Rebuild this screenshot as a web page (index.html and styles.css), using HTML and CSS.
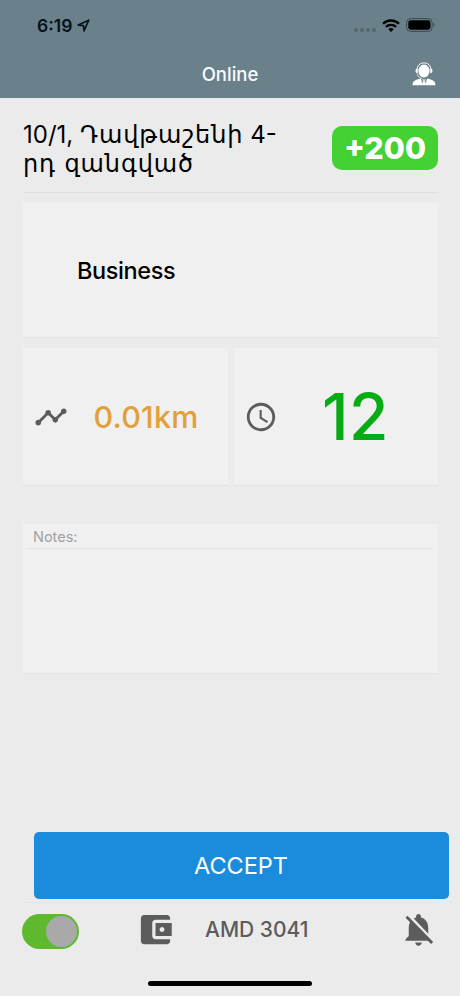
FILE: index.html
```html
<!DOCTYPE html>
<html lang="en">
<head>
    <meta charset="UTF-8">
    <meta name="viewport" content="width=device-width, initial-scale=1.0">
    <title>Online</title>
    <link rel="stylesheet" href="styles.css">
</head>
<body>

    <!-- Status bar and title -->
    <header class="header">
        <div class="status-bar">
            <span class="time">6:19</span>
            <svg class="location" width="13" height="13" viewBox="0 0 13 13"><path d="M1.2 6.1L11.8 1.2 7 11.8 6.5 6.6z" fill="none" stroke="#071219" stroke-width="1.6" stroke-linejoin="round"/></svg>
            <div class="signal"><i></i><i></i><i></i><i></i></div>
            <svg class="wifi" width="18" height="13" viewBox="0 0 18 13">
                <path d="M1 4.8a11.4 11.4 0 0 1 16 0M3.9 7.9a7.2 7.2 0 0 1 10.2 0" fill="none" stroke="#000" stroke-width="2.3"/>
                <path d="M9 12.9L6.3 10.2a3.9 3.9 0 0 1 5.4 0z"/>
            </svg>
            <svg class="battery" width="30" height="14" viewBox="0 0 30 14">
                <rect x="0.6" y="0.6" width="25.6" height="12.8" rx="4" fill="none" stroke="#3c4a51"/>
                <rect x="2.3" y="2.3" width="22.2" height="9.4" rx="2.4"/>
                <path d="M27.6 4.8v4.4c1.6-.8 1.6-3.6 0-4.4z" fill="#3c4a51"/>
            </svg>
        </div>
        <div class="title-bar">
            <h1>Online</h1>
            <svg class="operator" width="24" height="24" viewBox="0 0 24 24">
                <ellipse cx="12" cy="9" rx="5.6" ry="6.4" fill="#fff"/>
                <path d="M5 8.6C5 3.2 8 .9 12 .9s7 2.3 7 7.7" fill="none" stroke="#fff" stroke-width="1"/>
                <path d="M5.6 6.6v4.8c-2.8 0-2.8-4.8 0-4.8zM18.4 6.6v4.8c2.8 0 2.8-4.8 0-4.8z" fill="#fff"/>
                <path d="M5.2 11.5c.6 3 2.6 4.6 5 5" fill="none" stroke="#fff" stroke-width=".8"/>
                <path d="M.5 23.2c0-4.2 3.2-5.2 8.2-6.6l1.8 4.8.8-2.5h1.4l.8 2.5 1.8-4.8c5 1.4 8.2 2.4 8.2 6.6z" fill="#fff"/>
                <path d="M10 17.6h4l-1 1.2h-2z" fill="#fff"/>
            </svg>
        </div>
    </header>

    <main class="order">
        <!-- Address -->
        <section class="address-row">
            <p class="address">10/1, <span class="hy">Դավթաշենի</span> 4-<br><span class="hy">րդ զանգված</span></p>
            <span class="bonus">+200</span>
        </section>

        <section class="card tariff">Business</section>

        <!-- Distance and time -->
        <div class="stats">
            <section class="card stat">
                <svg class="stat-icon" viewBox="0 0 24 24"><path d="M23 8c0 1.1-.9 2-2 2-.18 0-.35-.02-.51-.07l-3.56 3.55c.05.16.07.34.07.52 0 1.1-.9 2-2 2s-2-.9-2-2c0-.18.02-.36.07-.52l-2.55-2.55c-.16.05-.34.07-.52.07s-.36-.02-.52-.07l-4.55 4.56c.05.16.07.33.07.51 0 1.1-.9 2-2 2s-2-.9-2-2 .9-2 2-2c.18 0 .35.02.51.07l4.56-4.55C8.02 9.36 8 9.18 8 9c0-1.1.9-2 2-2s2 .9 2 2c0 .18-.02.36-.07.52l2.55 2.55c.16-.05.34-.07.52-.07s.36.02.52.07l3.55-3.56C19.02 8.35 19 8.18 19 8c0-1.1.9-2 2-2s2 .9 2 2z"/></svg>
                <span class="distance">0.01km</span>
            </section>
            <section class="card stat">
                <svg class="stat-icon" viewBox="0 0 24 24"><path d="M11.99 2C6.47 2 2 6.48 2 12s4.47 10 9.99 10C17.52 22 22 17.52 22 12S17.52 2 11.99 2zM12 20c-4.42 0-8-3.58-8-8s3.58-8 8-8 8 3.58 8 8-3.58 8-8 8zm.5-13H11v6l5.25 3.15.75-1.23-4.5-2.67z"/></svg>
                <span class="countdown">12</span>
            </section>
        </div>

        <section class="card notes">
            <div class="notes-label">Notes:</div>
        </section>
    </main>

    <!-- Bottom bar -->
    <footer class="footer">
        <button class="accept-btn">ACCEPT</button>
        <div class="toolbar">
            <div class="toggle"><span class="knob"></span></div>
            <svg class="tool-icon wallet" viewBox="0 0 24 24"><path d="M21 18v1c0 1.1-.9 2-2 2H5c-1.11 0-2-.9-2-2V5c0-1.1.89-2 2-2h14c1.1 0 2 .9 2 2v1h-9c-1.11 0-2 .9-2 2v8c0 1.1.89 2 2 2h9zm-9-2h10V8H12v8zm4-2.5c-.83 0-1.5-.67-1.5-1.5s.67-1.5 1.5-1.5 1.5.67 1.5 1.5-.67 1.5-1.5 1.5z"/></svg>
            <span class="balance">AMD 3041</span>
            <svg class="tool-icon bell" viewBox="0 0 24 24"><path d="M20 18.69L7.84 6.14 5.27 3.49 4 4.76l2.8 2.8v.01c-.52.99-.8 2.16-.8 3.42v5l-2 2v1h13.73l2 2L21 19.72l-1-1.03zM12 22c1.11 0 2-.89 2-2h-4c0 1.11.89 2 2 2zm6-7.32V11c0-3.08-1.64-5.64-4.5-6.32V4c0-.83-.67-1.5-1.5-1.5s-1.5.67-1.5 1.5v.68c-.15.03-.29.08-.42.12-.1.03-.2.07-.3.11h-.01c-.01 0-.01 0-.02.01-.23.09-.46.2-.68.31 0 0-.01 0-.01.01L18 14.68z"/></svg>
        </div>
        <div class="home-indicator"></div>
    </footer>

</body>
</html>
```
FILE: styles.css
```css
/* Basic Styling */
* {
    box-sizing: border-box;
}

body {
    font-family: Inter, "DejaVu Sans", sans-serif;
    background-color: #ebebeb;
    color: #000;
    margin: 0;
    height: 996px;
    display: flex;
    flex-direction: column;
    overflow: hidden;
}

svg {
    display: block;
    flex-shrink: 0;
}

/* Header */
.header {
    background-color: #6a808a;
    height: 98px;
    flex-shrink: 0;
}

.status-bar {
    display: flex;
    align-items: center;
    height: 50px;
    padding: 0 24px 0 37px;
}

.time {
    font-size: 17.5px;
    font-weight: 600;
    color: #071219;
    width: 37px;
}

.location {
    margin-left: 3px;
}

.signal {
    display: flex;
    gap: 2px;
    margin: 9px 6px 0 auto;
}

.signal i {
    width: 4px;
    height: 4px;
    border-radius: 50%;
    background-color: #53666f;
}

.battery {
    margin-left: 6px;
}

.title-bar {
    display: grid;
    grid-template-columns: 1fr auto 1fr;
    align-items: center;
    height: 47px;
    padding-right: 24px;
    padding-left: 24px;
}

.title-bar h1 {
    grid-column: 2;
    margin: 0;
    font-size: 18.5px;
    font-weight: 500;
    color: #f6fcff;
}

.operator {
    justify-self: end;
}

/* Order */
.order {
    padding: 0 22px 0 23px;
    flex: 1;
}

.address-row {
    display: flex;
    justify-content: space-between;
    align-items: flex-start;
    height: 95px;
    padding-top: 22px;
    border-bottom: 1px solid #dfdfdf;
}

.address {
    margin: 0;
    font-size: 24px;
    line-height: 29px;
    white-space: nowrap;
}

.hy {
    font-family: "DejaVu Sans", sans-serif;
    font-size: 24px;
    line-height: 1;
    letter-spacing: 0.9px;
}

.bonus {
    margin-top: 6px;
    width: 106px;
    height: 44px;
    line-height: 44px;
    border-radius: 10px;
    background-color: #43d134;
    color: white;
    font-size: 30.5px;
    font-weight: 800;
    text-align: center;
}

.card {
    background-color: #f0f0f0;
    border-bottom: 1px solid #e4e4e4;
}

.tariff {
    height: 135px;
    margin-top: 10px;
    padding-left: 54px;
    font-size: 23.5px;
    font-weight: 500;
    letter-spacing: -0.4px;
    line-height: 136px;
}

.stats {
    display: grid;
    grid-template-columns: 1fr 1fr;
    gap: 6px;
    margin-top: 10px;
}

.stat {
    display: flex;
    align-items: center;
    height: 138px;
    padding-left: 10.5px;
}

.stat-icon {
    width: 34px;
    height: 34px;
    fill: #5c5c5c;
}

.distance {
    flex: 1;
    padding-left: 26px;
    font-size: 30.5px;
    font-weight: 450;
    letter-spacing: 0.2px;
    color: #e2a03a;
}

.countdown {
    flex: 1;
    padding-left: 44px;
    font-size: 64px;
    font-weight: 500;
    letter-spacing: 0.5px;
    color: #07ab14;
}

.notes {
    height: 150px;
    margin-top: 38px;
    padding: 0 5px;
}

.notes-label {
    height: 25px;
    padding-left: 5px;
    border-bottom: 1px solid #e2e2e2;
    font-size: 14.5px;
    line-height: 26px;
    color: #a0a0a0;
}

/* Footer */
.footer {
    height: 164px;
    flex-shrink: 0;
}

.accept-btn {
    display: block;
    width: 415px;
    height: 67px;
    margin: 0 11px 0 33.5px;
    padding: 0;
    border: none;
    border-radius: 5px;
    background-color: #1b8bdc;
    color: white;
    font-family: inherit;
    font-size: 23.5px;
    cursor: pointer;
}

.toolbar {
    display: flex;
    align-items: center;
    height: 54px;
    margin: 3px 22px 0 22px;
    border-top: 1px solid #e5e5e5;
}

.toggle {
    display: flex;
    justify-content: flex-end;
    width: 57px;
    height: 35px;
    margin-top: 4px;
    padding: 2px;
    border-radius: 18px;
    background-color: #5eb92f;
}

.knob {
    width: 31px;
    height: 31px;
    border-radius: 50%;
    background-color: #a9a9a9;
}

.tool-icon {
    width: 39px;
    height: 39px;
    fill: #5c5c5c;
}

.wallet {
    margin-left: 57px;
}

.balance {
    margin-left: 30px;
    font-size: 21px;
    font-weight: 500;
    color: #5c5c5c;
}

.bell {
    margin-left: auto;
}

.home-indicator {
    width: 164px;
    height: 5px;
    margin: 25px auto 0;
    border-radius: 3px;
    background-color: #000;
}
```
